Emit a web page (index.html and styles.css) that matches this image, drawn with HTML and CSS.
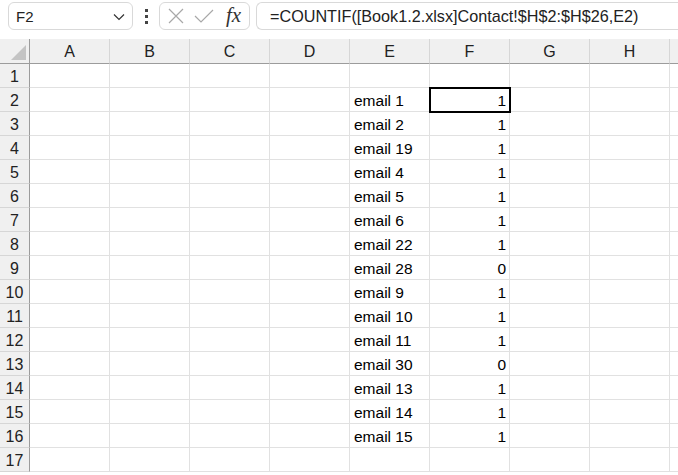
FILE: index.html
```html
<!DOCTYPE html>
<html lang="en">
<head>
  <meta charset="UTF-8">
  <title>Book1</title>
  <link rel="stylesheet" href="styles.css">
</head>
<body>
  <div class="toolbar">
    <div class="name-box">
      <span>F2</span>
      <svg class="chevron" width="12" height="8" viewBox="0 0 12 8"><path d="M1 1.5 L6 6.5 L11 1.5" fill="none" stroke="#333" stroke-width="1.2"/></svg>
    </div>
    <div class="dots"><i></i><i></i><i></i></div>
    <div class="edit-box">
      <svg width="16" height="16" viewBox="0 0 16 16"><path d="M1 1 L15 15 M15 1 L1 15" stroke="#a8a8a8" stroke-width="1.2"/></svg>
      <svg width="20" height="14" viewBox="0 0 20 14"><path d="M1 7 L7 13 L19 1" fill="none" stroke="#a8a8a8" stroke-width="1.2"/></svg>
      <span class="fx">fx</span>
    </div>
    <div class="formula-box">=COUNTIF([Book1.2.xlsx]Contact!$H$2:$H$26,E2)</div>
  </div>

  <div class="sheet" id="sheet">
    <div class="corner"><span class="tri"></span></div>
    <div class="col-head">A</div>
    <div class="col-head">B</div>
    <div class="col-head">C</div>
    <div class="col-head">D</div>
    <div class="col-head">E</div>
    <div class="col-head">F</div>
    <div class="col-head">G</div>
    <div class="col-head">H</div>
    <div class="col-head"></div>
  </div>

  <script>
    // data for columns E and F, rows 2..16
    var rows = [
      ["email 1", 1], ["email 2", 1], ["email 19", 1], ["email 4", 1],
      ["email 5", 1], ["email 6", 1], ["email 22", 1], ["email 28", 0],
      ["email 9", 1], ["email 10", 1], ["email 11", 1], ["email 30", 0],
      ["email 13", 1], ["email 14", 1], ["email 15", 1]
    ];
    var sheet = document.getElementById("sheet");
    for (var r = 1; r <= 17; r++) {
      var html = '<div class="row-head">' + r + '</div>';
      var data = rows[r - 2];
      for (var c = 0; c < 9; c++) {
        var cls = "cell";
        var text = "";
        if (data && c === 4) text = data[0];
        if (data && c === 5) { text = data[1]; cls += " num"; }
        if (r === 2 && c === 5) cls += " active";
        html += '<div class="' + cls + '">' + text + '</div>';
      }
      sheet.insertAdjacentHTML("beforeend", html);
    }
  </script>
</body>
</html>
```

FILE: styles.css
```css
body {
  margin: 0;
  background: #fff;
  font-family: 'Liberation Sans', Arial, sans-serif;
  color: #000;
  overflow: hidden;
}
.toolbar {
  height: 39px;
  display: flex;
  align-items: flex-start;
  padding: 2px 0 0 8px;
  box-sizing: border-box;
}
.name-box {
  width: 125px;
  height: 28px;
  box-sizing: border-box;
  border: 1px solid #d9d9d9;
  border-radius: 6px;
  display: flex;
  align-items: center;
  justify-content: space-between;
  padding: 0 7px 0 7px;
  font-size: 15px;
  color: #222;
}
.chevron {
  margin-top: 2px;
}
.dots {
  width: 26px;
  height: 28px;
  display: flex;
  flex-direction: column;
  align-items: center;
  justify-content: center;
  gap: 3px;
}
.dots i {
  width: 3px;
  height: 3px;
  background: #444;
  display: block;
}
.edit-box {
  width: 91px;
  height: 28px;
  box-sizing: border-box;
  border: 1px solid #d9d9d9;
  border-radius: 6px;
  display: flex;
  align-items: center;
  padding: 0 0 0 8px;
  gap: 10px;
}
.fx {
  font-family: 'Liberation Serif', 'Times New Roman', serif;
  font-style: italic;
  font-size: 21px;
  color: #333;
  margin-left: 2px;
  margin-top: -2px;
}
.formula-box {
  flex: 1;
  height: 28px;
  margin-left: 6px;
  box-sizing: border-box;
  border: 1px solid #d9d9d9;
  border-right: none;
  border-radius: 6px 0 0 6px;
  padding: 0 0 0 13px;
  line-height: 26px;
  font-size: 16.2px;
  color: #222;
  white-space: nowrap;
}
.sheet {
  display: grid;
  grid-template-columns: 30px repeat(8, 80px) 40px;
  grid-auto-rows: 24px;
  grid-template-rows: 25px;
}
.corner,
.col-head,
.row-head {
  background: #f0f0f0;
  box-sizing: border-box;
  color: #222;
}
.corner {
  position: relative;
  border-right: 1px solid #9c9c9c;
  border-bottom: 1px solid #9c9c9c;
}
.tri {
  position: absolute;
  right: 3px;
  bottom: 3px;
  width: 0;
  height: 0;
  border-left: 15px solid transparent;
  border-bottom: 15px solid #c4c4c4;
}
.col-head {
  border-right: 1px solid #d6d6d6;
  border-bottom: 1px solid #9c9c9c;
  text-align: center;
  font-size: 16px;
  line-height: 26px;
}
.row-head {
  border-right: 1px solid #9c9c9c;
  border-bottom: 1px solid #d6d6d6;
  text-align: center;
  font-size: 16px;
  line-height: 25px;
}
.cell {
  box-sizing: border-box;
  border-right: 1px solid #e1e1e1;
  border-bottom: 1px solid #e1e1e1;
  padding: 0 3px 0 4px;
  font-size: 15.5px;
  line-height: 25px;
  white-space: nowrap;
}
.num {
  text-align: right;
}
.active {
  outline: 2px solid #000;
  outline-offset: -1px;
  position: relative;
  z-index: 1;
}
```
